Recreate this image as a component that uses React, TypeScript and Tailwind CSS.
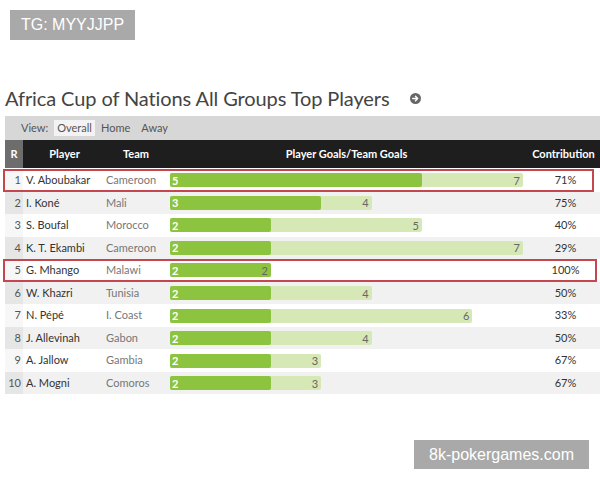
import React from 'react';

const rows = [
  { r: 1, player: 'V. Aboubakar', team: 'Cameroon', goals: 5, teamGoals: 7, pct: '71%', hi: true },
  { r: 2, player: 'I. Koné', team: 'Mali', goals: 3, teamGoals: 4, pct: '75%' },
  { r: 3, player: 'S. Boufal', team: 'Morocco', goals: 2, teamGoals: 5, pct: '40%' },
  { r: 4, player: 'K. T. Ekambi', team: 'Cameroon', goals: 2, teamGoals: 7, pct: '29%' },
  { r: 5, player: 'G. Mhango', team: 'Malawi', goals: 2, teamGoals: 2, pct: '100%', hi: true },
  { r: 6, player: 'W. Khazri', team: 'Tunisia', goals: 2, teamGoals: 4, pct: '50%' },
  { r: 7, player: 'N. Pépé', team: 'I. Coast', goals: 2, teamGoals: 6, pct: '33%' },
  { r: 8, player: 'J. Allevinah', team: 'Gabon', goals: 2, teamGoals: 4, pct: '50%' },
  { r: 9, player: 'A. Jallow', team: 'Gambia', goals: 2, teamGoals: 3, pct: '67%' },
  { r: 10, player: 'A. Mogni', team: 'Comoros', goals: 2, teamGoals: 3, pct: '67%' },
];

const PX_PER_GOAL = 50.4;

const cols = 'grid grid-cols-[18px_81px_64px_357px_1fr]';

export default function App() {
  return (
    <div className="w-[600px] h-[480px] bg-white relative overflow-hidden font-['Lato','Noto_Sans',sans-serif] text-[#444]">
      {/* watermark top */}
      <div className="absolute left-[10px] top-[10px] w-[125px] h-[30px] bg-[#a9a9a9] text-white text-[16px] font-['Liberation_Sans',sans-serif] flex items-center justify-center">
        TG: MYYJJPP
      </div>

      <div className="pt-[86px] pl-[5px]">
        <div className="flex items-center h-[24px]">
          <h1 className="text-[20px] leading-[24px] text-[#444] tracking-[-0.1px]">Africa Cup of Nations All Groups Top Players</h1>
          <svg className="ml-[21px] mt-[1px]" width="11" height="11" viewBox="0 0 12 12">
            <circle cx="6" cy="6" r="6" fill="#666" />
            <path d="M3 6h5M6 3.6 8.4 6 6 8.4" stroke="#fff" strokeWidth="1.6" fill="none" strokeLinecap="round" strokeLinejoin="round" />
          </svg>
        </div>

        <div className="mt-[6px] w-[595px]">
          {/* view bar */}
          <div className="h-[24px] bg-[#d7d7d7] flex items-center pl-[16px] text-[11px] text-[#555]">
            <span>View:</span>
            <span className="ml-[6px] px-[3px] h-[16px] leading-[16px] bg-[#f3f3f3]">Overall</span>
            <span className="ml-[6px]">Home</span>
            <span className="ml-[11px]">Away</span>
          </div>

          {/* header */}
          <div className={`${cols} h-[28px] bg-[#1e1e1e] text-white text-[11px] font-bold items-center`}>
            <div className="h-full bg-[#6d6d6d] flex items-center justify-center">R</div>
            <div className="text-center pl-[2px]">Player</div>
            <div className="text-center">Team</div>
            <div className="text-center">Player Goals/Team Goals</div>
            <div className="text-center pl-[2px]">Contribution</div>
          </div>

          {/* rows */}
          <div className="pt-[1px]">
            {rows.map((row, i) => {
              const even = i % 2 === 1;
              return (
                <div
                  key={row.r}
                  className={`${cols} relative h-[22.55px] items-center text-[11px] ${even ? 'bg-[#f1f1f1]' : 'bg-white'}`}
                >
                  <div className={`h-full flex items-center justify-end pr-[2px] text-[#555] ${even ? 'bg-[#e6e6e6]' : 'bg-[#f7f7f7]'}`}>
                    {row.r}
                  </div>
                  <div className="pl-[3px] text-[#333] whitespace-nowrap">{row.player}</div>
                  <div className="pl-[2px] text-[#777]">{row.team}</div>
                  <div className="pl-[2px] h-full flex items-center">
                    <div
                      className="relative h-[14px] rounded-[2px] bg-[#d5e8b6]"
                      style={{ width: row.teamGoals * PX_PER_GOAL }}
                    >
                      <div
                        className="absolute left-0 top-0 h-full rounded-[2px] bg-[#8cc43f] flex items-center pl-[2px] text-white font-bold text-[11px] leading-none"
                        style={{ width: row.goals * PX_PER_GOAL }}
                      >
                        {row.goals}
                      </div>
                      <span className="absolute right-[3px] top-0 h-full flex items-center text-[#666] text-[11px] leading-none">
                        {row.teamGoals}
                      </span>
                    </div>
                  </div>
                  <div className="text-center pl-[6px] text-[#333]">{row.pct}</div>
                  {row.hi && (
                    <div
                      className={`absolute -left-[2px] top-0 bottom-0 border-2 border-[#c4464e] pointer-events-none ${row.r === 1 ? 'right-[6px]' : 'right-[3px]'}`}
                    />
                  )}
                </div>
              );
            })}
          </div>
        </div>
      </div>

      {/* watermark bottom */}
      <div className="absolute left-[414px] top-[440px] w-[175px] h-[29px] bg-[#a9a9a9] text-white text-[16px] font-['Liberation_Sans',sans-serif] flex items-center justify-center">
        8k-pokergames.com
      </div>
    </div>
  );
}
